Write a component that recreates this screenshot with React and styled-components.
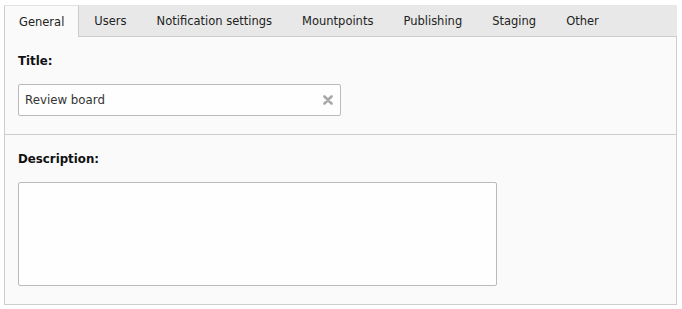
import React from "react";
import styled, { createGlobalStyle } from "styled-components";

const GlobalStyle = createGlobalStyle`
  body {
    margin: 0;
    background: #ffffff;
    font-family: "DejaVu Sans", Verdana, sans-serif;
    font-size: 12px;
    color: #000;
  }
`;

const tabs = [
  "General",
  "Users",
  "Notification settings",
  "Mountpoints",
  "Publishing",
  "Staging",
  "Other",
];

const Page = styled.div`
  padding: 5px 5px 0 4px;
`;

const Frame = styled.div`
  width: 673px;
`;

const TabBar = styled.ul`
  display: flex;
  margin: 0;
  padding: 0;
  list-style: none;
  height: 31px;
  background: #e8e8e8;
  border-bottom: 1px solid #cdcdcd;
`;

const Tab = styled.li`
  display: flex;
  align-items: center;
  height: ${(p) => (p.$active ? "32px" : "31px")};
  padding: 0 14px;
  box-sizing: border-box;
  font-size: 11.5px;
  color: #222;
  background: ${(p) => (p.$active ? "#fafafa" : "transparent")};
  border: 1px solid ${(p) => (p.$active ? "#cdcdcd" : "transparent")};
  border-bottom: none;
  border-top-color: ${(p) => (p.$active ? "#e2e2e2" : "transparent")};
  white-space: nowrap;
`;

const Panel = styled.div`
  background: #fafafa;
  border: 1px solid #cdcdcd;
  border-top: none;
`;

const Section = styled.div`
  padding: 16px 13px 18px;
  & + & {
    border-top: 1px solid #cdcdcd;
  }
`;

const Label = styled.div`
  font-weight: bold;
  font-size: 11.8px;
  line-height: 16px;
  margin-bottom: 15px;
  color: #111;
`;

const InputWrap = styled.div`
  position: relative;
  width: 323px;
`;

const TextInput = styled.input`
  display: block;
  width: 100%;
  height: 32px;
  box-sizing: border-box;
  padding: 0 24px 0 6px;
  border: 1px solid #bbbbbb;
  border-radius: 2px;
  background: #fefefe;
  font-family: inherit;
  font-size: 11.8px;
  color: #333;
  outline: none;
`;

const Clear = styled.svg`
  position: absolute;
  right: 8px;
  top: 11px;
`;

const TextArea = styled.textarea`
  display: block;
  width: 479px;
  height: 104px;
  box-sizing: border-box;
  border: 1px solid #bbbbbb;
  border-radius: 2px;
  background: #fefefe;
  resize: none;
  outline: none;
  font-family: inherit;
  font-size: 12px;
`;

export default function App() {
  return (
    <Page>
      <GlobalStyle />
      <Frame>
        <TabBar>
          {tabs.map((t, i) => (
            <Tab key={t} $active={i === 0}>
              {t}
            </Tab>
          ))}
        </TabBar>
        <Panel>
          <Section>
            <Label>Title:</Label>
            <InputWrap>
              <TextInput defaultValue="Review board" />
              <Clear width="10" height="10" viewBox="0 0 10 10">
                <path
                  d="M1.5 1.5 L8.5 8.5 M8.5 1.5 L1.5 8.5"
                  stroke="#a8a8a8"
                  strokeWidth="2.6"
                  strokeLinecap="round"
                />
              </Clear>
            </InputWrap>
          </Section>
          <Section>
            <Label>Description:</Label>
            <TextArea />
          </Section>
        </Panel>
      </Frame>
    </Page>
  );
}
